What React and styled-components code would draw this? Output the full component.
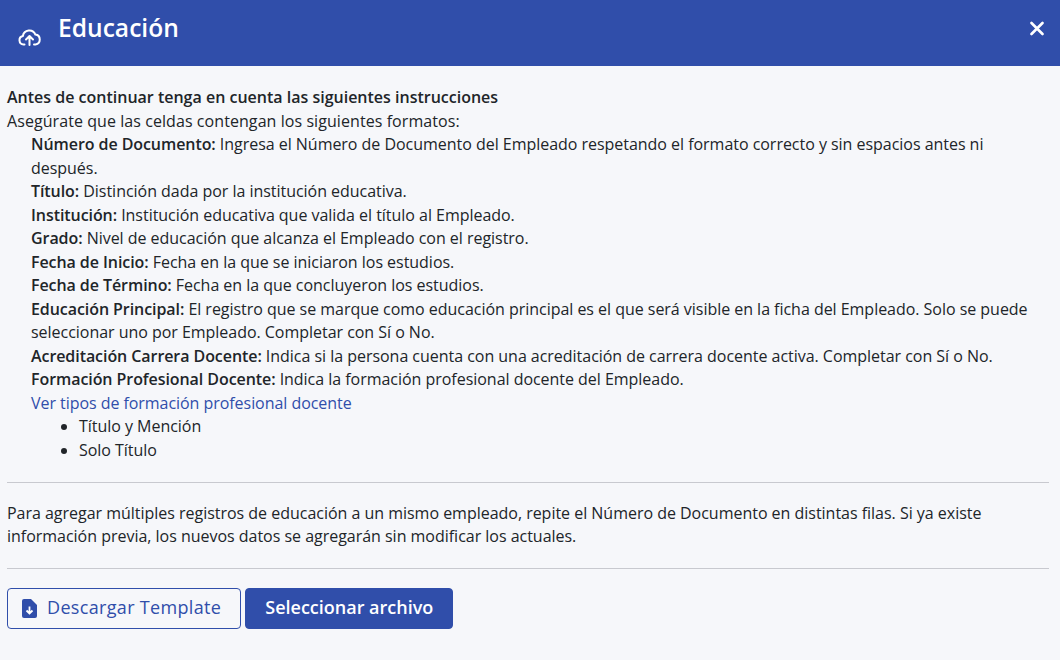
import React from 'react';
import styled, { createGlobalStyle } from 'styled-components';

const Global = createGlobalStyle`
  html, body { margin: 0; padding: 0; background: #f6f7fa; }
`;
const Modal = styled.div`
  width: 1060px; height: 660px; overflow: hidden; background: #f6f7fa; color: #212529;
  font-family: "Open Sans", sans-serif; font-size: 16px; line-height: 23.5px;
`;
const Header = styled.header`
  height: 66px; background: #304eaa; color: #fff; display: flex; align-items: center;
  padding: 0 16px 0 18px; box-sizing: border-box;
`;
const CloudIcon = styled.svg`margin-top: 7px; flex: none;`;
const Title = styled.h1`
  margin: 0 0 10px 17px; font-size: 24.6px; font-weight: 600; flex: 1; line-height: 1.2;
`;
const Close = styled.button`
  border: 0; background: none; padding: 0; color: #fff; width: 14px; height: 15px; display: flex; margin-bottom: 9px;
`;
const Body = styled.main`padding: 20px 7px 0;`;
const Strong = styled.strong`font-weight: 600;`;
const Intro = styled.div`letter-spacing: 0.07px;`;
const Label = styled.strong`font-weight: 600; letter-spacing: -0.07px;`;
const Fields = styled.div`padding-left: 24px; letter-spacing: -0.03px;`;
const Link = styled.a`color: #304eaa; text-decoration: none; letter-spacing: -0.05px;`;
const Bullets = styled.ul`margin: 0; padding-left: 48px;`;
const Rule = styled.hr`margin: 20px 4px 18.5px 0; border: 0; border-top: 1px solid #c8c9cf;`;
const Para = styled.p`margin: 0 0 -1px; letter-spacing: -0.02px;`;
const Actions = styled.div`display: flex; gap: 4px; margin-top: 19px;`;
const OutlineButton = styled.button`
  height: 41px; border-radius: 4px; border: 1px solid #304eaa; font: inherit; font-size: 18px; font-weight: 500;
  letter-spacing: 0.33px; padding: 0 19px 0 14px; display: flex; align-items: center; gap: 10px;
  background: transparent; color: #304eaa;
`;
const SolidButton = styled.button`
  height: 41px; border-radius: 4px; border: 1px solid #304eaa; font: inherit; font-size: 18px; font-weight: 600;
  padding: 0 19px; display: flex; align-items: center; background: #304eaa; color: #fff;
`;

const fields = [
  ['Número de Documento:', 'Ingresa el Número de Documento del Empleado respetando el formato correcto y sin espacios antes ni después.'],
  ['Título:', 'Distinción dada por la institución educativa.'],
  ['Institución:', 'Institución educativa que valida el título al Empleado.'],
  ['Grado:', 'Nivel de educación que alcanza el Empleado con el registro.'],
  ['Fecha de Inicio:', 'Fecha en la que se iniciaron los estudios.'],
  ['Fecha de Término:', 'Fecha en la que concluyeron los estudios.'],
  ['Educación Principal:', 'El registro que se marque como educación principal es el que será visible en la ficha del Empleado. Solo se puede seleccionar uno por Empleado. Completar con Sí o No.'],
  ['Acreditación Carrera Docente:', 'Indica si la persona cuenta con una acreditación de carrera docente activa. Completar con Sí o No.'],
  ['Formación Profesional Docente:', 'Indica la formación profesional docente del Empleado.'],
];

export default function App() {
  return (
    <Modal>
      <Global />
      <Header>
        <CloudIcon width="23" height="18" viewBox="0 0 23 18" fill="none" stroke="#fff" strokeWidth="2" strokeLinecap="round" strokeLinejoin="round">
          <path d="M6.5 16.5H5.5a4.3 4.3 0 0 1-.6-8.5A6.5 6.5 0 0 1 17.4 6.6a5 5 0 0 1 .1 9.9h-1.5" />
          <path d="M11.5 17V8.5M8 11.5l3.5-3.5 3.5 3.5" />
        </CloudIcon>
        <Title>Educación</Title>
        <Close aria-label="Cerrar">
          <svg width="14" height="15" viewBox="0 0 14 15" stroke="#fff" strokeWidth="2.6" strokeLinecap="round"><path d="M1.5 2l11 11M12.5 2l-11 11" /></svg>
        </Close>
      </Header>
      <Body>
        <Strong>Antes de continuar tenga en cuenta las siguientes instrucciones</Strong>
        <Intro>Asegúrate que las celdas contengan los siguientes formatos:</Intro>
        <Fields>
          {fields.map(([k, v]) => <div key={k}><Label>{k}</Label> {v}</div>)}
          <Link href="#">Ver tipos de formación profesional docente</Link>
          <Bullets><li>Título y Mención</li><li>Solo Título</li></Bullets>
        </Fields>
        <Rule />
        <Para>Para agregar múltiples registros de educación a un mismo empleado, repite el Número de Documento en distintas filas. Si ya existe información previa, los nuevos datos se agregarán sin modificar los actuales.</Para>
        <Rule />
        <Actions>
          <OutlineButton>
            <svg width="15" height="19" viewBox="0 0 15 19"><path fill="#304eaa" d="M2 0h7l6 6v11a2 2 0 0 1-2 2H2a2 2 0 0 1-2-2V2a2 2 0 0 1 2-2z" /><path d="M7.5 7.5v7M4.5 11.5l3 3 3-3" stroke="#fff" strokeWidth="1.8" fill="none" /></svg>
            Descargar Template
          </OutlineButton>
          <SolidButton>Seleccionar archivo</SolidButton>
        </Actions>
      </Body>
    </Modal>
  );
}
